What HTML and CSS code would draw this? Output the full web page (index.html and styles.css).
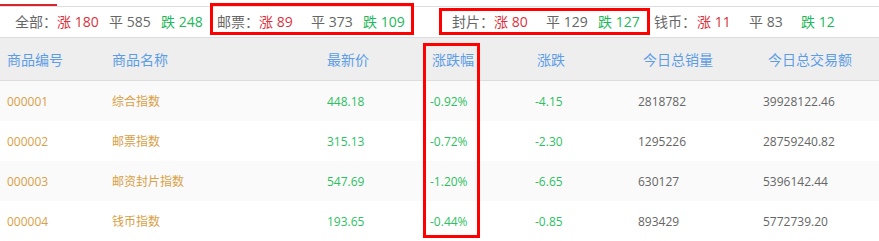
FILE: index.html
```html
<!DOCTYPE html>
<html lang="zh-CN">
<head>
<meta charset="utf-8">
<title>行情</title>
<link rel="stylesheet" href="styles.css">
</head>
<body>
<div class="page">
  <div class="tabs"><span class="tab-active"></span></div>
  <div class="stats">
    <div class="group g1">
      <span class="label">全部：</span>
      <span class="item up">涨 180</span>
      <span class="item flat">平 585</span>
      <span class="item down">跌 248</span>
    </div>
    <div class="group g2">
      <span class="label">邮票：</span>
      <span class="item up">涨 89</span>
      <span class="item flat">平 373</span>
      <span class="item down">跌 109</span>
    </div>
    <div class="group g3">
      <span class="label">封片：</span>
      <span class="item up">涨 80</span>
      <span class="item flat">平 129</span>
      <span class="item down">跌 127</span>
    </div>
    <div class="group g4">
      <span class="label">钱币：</span>
      <span class="item up">涨 11</span>
      <span class="item flat">平 83</span>
      <span class="item down">跌 12</span>
    </div>
  </div>
  <div class="thead">
    <span>商品编号</span>
    <span>商品名称</span>
    <span>最新价</span>
    <span>涨跌幅</span>
    <span>涨跌</span>
    <span>今日总销量</span>
    <span>今日总交易额</span>
  </div>
  <div class="row odd">
    <span class="code">000001</span>
    <span class="name">综合指数</span>
    <span class="num green">448.18</span>
    <span class="green">-0.92%</span>
    <span class="green">-4.15</span>
    <span class="gray">2818782</span>
    <span class="gray">39928122.46</span>
  </div>
  <div class="row">
    <span class="code">000002</span>
    <span class="name">邮票指数</span>
    <span class="num green">315.13</span>
    <span class="green">-0.72%</span>
    <span class="green">-2.30</span>
    <span class="gray">1295226</span>
    <span class="gray">28759240.82</span>
  </div>
  <div class="row odd">
    <span class="code">000003</span>
    <span class="name">邮资封片指数</span>
    <span class="num green">547.69</span>
    <span class="green">-1.20%</span>
    <span class="green">-6.65</span>
    <span class="gray">630127</span>
    <span class="gray">5396142.44</span>
  </div>
  <div class="row">
    <span class="code">000004</span>
    <span class="name">钱币指数</span>
    <span class="num green">193.65</span>
    <span class="green">-0.44%</span>
    <span class="green">-0.85</span>
    <span class="gray">893429</span>
    <span class="gray">5772739.20</span>
  </div>

  <div class="mark mark-1"></div>
  <div class="mark mark-2"></div>
  <div class="mark mark-3"></div>
</div>
</body>
</html>
```
FILE: styles.css
```css
html, body {
  margin: 0;
  padding: 0;
  background: #ffffff;
}

.page {
  position: relative;
  width: 879px;
  height: 241px;
  overflow: hidden;
  font-family: "Open Sans", "Noto Sans CJK SC", sans-serif;
  color: #666666;
}

.tabs {
  height: 2px;
  padding-top: 4px;
  border-bottom: 1px solid #dddddd;
}

.tab-active {
  display: block;
  width: 57px;
  height: 2px;
  background: #d8262f;
}

.stats {
  display: flex;
  align-items: center;
  height: 30px;
  padding-left: 15px;
  border-bottom: 1px solid #dddddd;
  font-size: 14px;
  line-height: 30px;
  white-space: nowrap;
}

.group {
  display: flex;
}

.g1 { margin-right: 4px; }
.g2 { margin-right: 37px; }
.g3 { margin-right: 4px; }

.label {
  width: 42px;
  color: #666666;
}

.g4 .label { width: 43px; }

.item {
  width: 52px;
}

.up { color: #d9323e; }
.flat { color: #666666; }
.down { color: #22b85a; }

.thead {
  display: grid;
  grid-template-columns: 105px 215px 105px 105px 106px 125px 1fr;
  align-items: center;
  height: 42px;
  padding-left: 7px;
  background: #eeeeee;
  border-bottom: 1px solid #dddddd;
  font-size: 14px;
  color: #5d9de6;
}

.row {
  display: grid;
  grid-template-columns: 105px 215px 103px 105px 103px 125px 1fr;
  align-items: center;
  height: 40px;
  padding-left: 7px;
  font-size: 12px;
  background: #ffffff;
}

.row.odd {
  background: #fafafa;
}

.code, .name {
  color: #d9a047;
}

.green { color: #2ebf62; }
.gray { color: #666666; }

.mark {
  position: absolute;
  border: 3px solid #ff0000;
  box-sizing: border-box;
}

.mark-1 {
  left: 210px;
  top: 3px;
  width: 204px;
  height: 32px;
}

.mark-2 {
  left: 439px;
  top: 8px;
  width: 211px;
  height: 27px;
}

.mark-3 {
  left: 423px;
  top: 43px;
  width: 57px;
  height: 195px;
}
```
